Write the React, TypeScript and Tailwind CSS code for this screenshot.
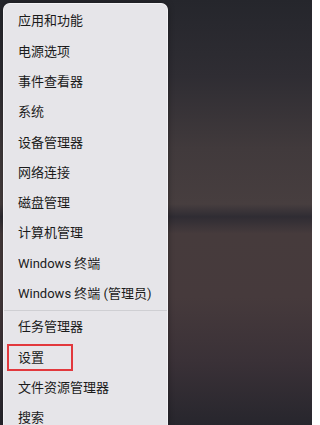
const items = [
  "应用和功能",
  "电源选项",
  "事件查看器",
  "系统",
  "设备管理器",
  "网络连接",
  "磁盘管理",
  "计算机管理",
  "Windows 终端",
  "Windows 终端 (管理员)",
];

const lower = ["任务管理器", "设置", "文件资源管理器", "搜索"];

function Item({ label, marked }: { label: string; marked?: boolean }) {
  return (
    <div className="relative flex h-[30.3px] items-center pl-[14px] text-[13px] text-[#1b1b1b]">
      {label}
      {marked && (
        <div className="absolute left-[3px] top-[2px] h-[27px] w-[66px] border-2 border-[#e2383d]" />
      )}
    </div>
  );
}

export default function App() {
  return (
    <div
      className="flex h-[425px] w-[312px] overflow-hidden bg-[linear-gradient(180deg,#25262c_0%,#2f2d33_18%,#413a3c_35%,#473e3f_48%,#2f2c33_51%,#463b3c_55%,#463a3c_70%,#3a3137_85%,#27262d_100%)] pl-[3px] pt-[3px]"
      style={{ fontFamily: 'Roboto, "Noto Sans CJK SC", sans-serif' }}
    >
      <div className="w-[165px] shrink-0 rounded-t-[7px] border border-b-0 border-[#f3f2f5] bg-[#e6e5e9] pt-[2px] shadow-[0_0_6px_rgba(0,0,0,0.35)]">
        {items.map((label) => (
          <Item key={label} label={label} />
        ))}
        <div className="flex h-[3px] items-center">
          <div className="h-px w-full bg-[#cfcfd3]" />
        </div>
        {lower.map((label) => (
          <Item key={label} label={label} marked={label === "设置"} />
        ))}
      </div>
    </div>
  );
}
